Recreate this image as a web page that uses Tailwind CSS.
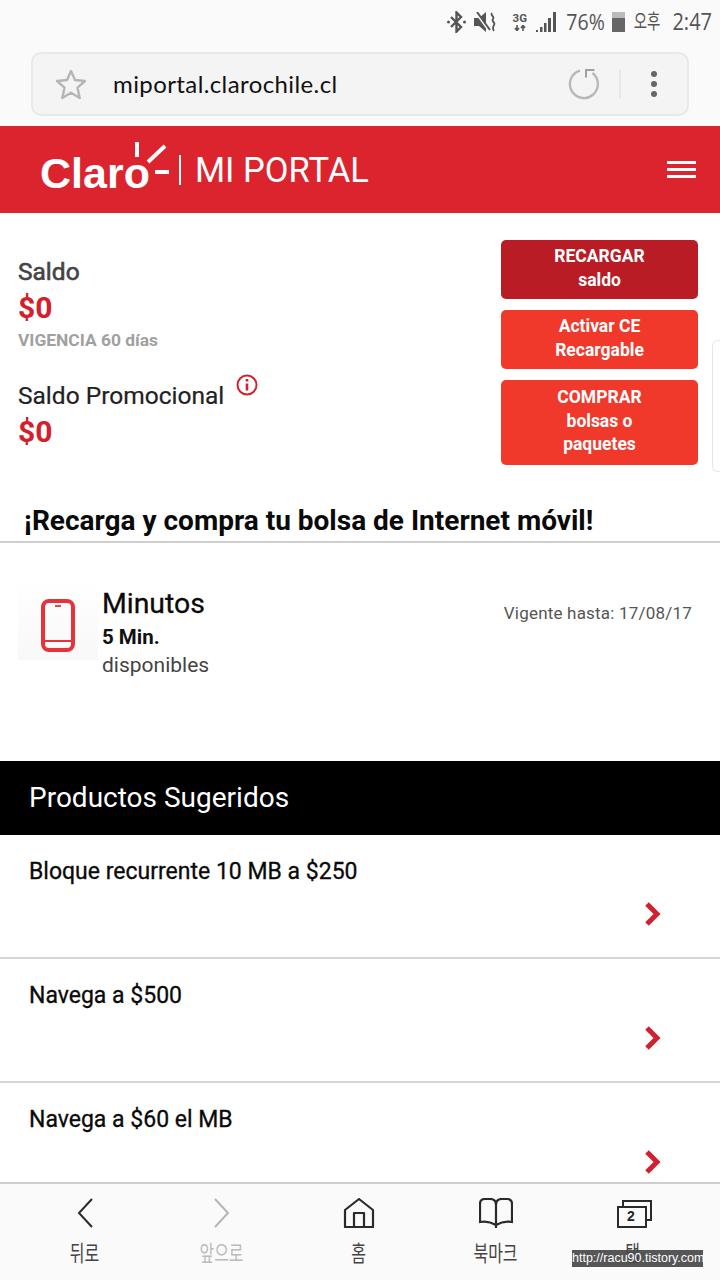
<!DOCTYPE html>
<html lang="es">
  <head>
    <meta charset="UTF-8" />
    <title>Mi Portal</title>
    <script src="https://cdn.jsdelivr.net/npm/@tailwindcss/browser@4"></script>
  </head>
  <body class="bg-white">
    <div class="relative w-[720px] h-[1280px] overflow-hidden flex flex-col font-['Roboto',sans-serif]">
      <!-- Browser chrome -->
      <div class="h-[126px] shrink-0 bg-[#fafafa] flex flex-col">
        <div class="h-[43px] flex items-center justify-end pr-[8px] text-[#555] font-['Open_Sans',sans-serif]">
          <svg class="w-[19px] h-[22px] mr-[8px]" viewBox="0 0 19 22" fill="none" stroke="#555" stroke-width="2.400"><path d="M4 6l10 10-4.500 4.500V1.500L14 6 4 16"/><circle cx="1.500" cy="11" r="1.500" fill="#555" stroke="none"/><circle cx="17.500" cy="11" r="1.500" fill="#555" stroke="none"/></svg>
          <svg class="w-[22px] h-[20px] mr-[16px]" viewBox="0 0 22 20" fill="#555"><path d="M0 6h5l7-6v20l-7-6H0z"/><path d="M2 1l13 18" stroke="#fafafa" stroke-width="2"/><path d="M3 0l13 18" stroke="#555" stroke-width="2"/><path d="M18 1c-2 3 3 3 1 6s3 3 1 6-1 4 0 6" fill="none" stroke="#555" stroke-width="1.800"/></svg>
          <div class="flex flex-col items-center mr-[9px] w-[15px] font-['Roboto',sans-serif]">
            <span class="text-[11.500px] leading-[12px] font-bold">3G</span>
            <svg class="mt-[1px] w-[12px] h-[6px]" viewBox="0 0 12 6" fill="none" stroke="#555" stroke-width="1.600"><path d="M3 0v5M1 3l2 2.500L5 3M9 6V1M7 3l2-2.500L11 3"/></svg>
          </div>
          <svg class="w-[20px] h-[20px] mr-[10px]" viewBox="0 0 20 20" fill="#555"><path d="M0 18h2v2H0zM4 15h2.500v5H4zM8 11h2.500v9H8zM12 6h3v14h-3zM17 0h3v20h-3z"/></svg>
          <span class="text-[19.500px] leading-none mr-[7px] scale-y-[1.15]">76%</span>
          <div class="relative w-[13px] h-[20px] mr-[9px] bg-[#666]">
            <div class="absolute left-0 top-0 w-full h-[6px] bg-[#bbb]"></div>
          </div>
          <span class="text-[14.500px] leading-none mr-[12px] scale-y-[1.4] font-['Noto_Sans_CJK_KR',sans-serif]">오후</span>
          <span class="text-[20px] leading-none scale-y-[1.15]">2:47</span>
        </div>
        <div class="mt-[9px] mx-[31px] h-[64px] rounded-[10px] border-2 border-[#e9e9e9] bg-[#f4f4f4] flex items-center">
          <svg class="ml-[22px] w-[32px] h-[32px]" viewBox="0 0 32 32" fill="none" stroke="#b5b5b5" stroke-width="2.400" stroke-linejoin="round"><path d="M16 3l4 9 10 1-7.500 6.700L24.700 30 16 24.700 7.300 30l2.200-10.300L2 13l10-1z"/></svg>
          <span class="ml-[26px] text-[24px] leading-none text-[#111] font-['Lato',sans-serif] tracking-[0.4px]">miportal.clarochile.cl</span>
          <svg class="ml-auto w-[32px] h-[32px]" viewBox="0 0 32 32" fill="none" stroke="#b8b8b8" stroke-width="2.400"><path d="M12 2.600A14 14 0 1 0 24.500 5"/><path d="M26.500 2H18v7.500" stroke="#a0a0a0" stroke-width="2"/></svg>
          <div class="ml-[19px] w-[2px] h-[28px] bg-[#e6e6e6]"></div>
          <div class="ml-[30px] mr-[30px] flex flex-col gap-[4px]">
            <div class="w-[6px] h-[6px] rounded-full bg-[#666]"></div>
            <div class="w-[6px] h-[6px] rounded-full bg-[#666]"></div>
            <div class="w-[6px] h-[6px] rounded-full bg-[#666]"></div>
          </div>
        </div>
      </div>

      <!-- Site header -->
      <header class="h-[87px] shrink-0 bg-[#dc242e] flex items-center text-white">
        <div class="relative ml-[40px] w-[130px] h-[60px] font-['Liberation_Sans',sans-serif]">
          <span class="absolute left-0 top-[9px] text-[43px] leading-[48px] font-bold">Claro</span>
          <svg class="absolute left-0 top-0 w-[130px] h-[60px]" viewBox="0 0 130 60" stroke="#fff" stroke-width="4" fill="none"><path d="M97 2v15M108 22l17-16M115 32h14"/></svg>
        </div>
        <div class="ml-[9px] w-[2px] h-[30px] bg-white"></div>
        <span class="ml-[14px] pt-[2px] text-[34.500px] leading-none">MI PORTAL</span>
        <div class="ml-auto mr-[24px] flex flex-col gap-[4px]">
          <div class="w-[29px] h-[3px] bg-white"></div>
          <div class="w-[29px] h-[3px] bg-white"></div>
          <div class="w-[29px] h-[3px] bg-white"></div>
        </div>
      </header>

      <main class="flex-1 min-h-0 overflow-hidden flex flex-col">
        <!-- Balance -->
        <section class="h-[291px] shrink-0 flex justify-between pl-[18px] pr-[22px]">
          <div class="pt-[44px]">
            <h2 class="text-[24.500px] leading-[29px] text-[#444] [-webkit-text-stroke:0.6px]">Saldo</h2>
            <p class="mt-[4px] text-[30px] leading-[36px] font-bold text-[#d3202c]">$0</p>
            <p class="mt-[4px] text-[17.400px] leading-[20px] font-bold text-[#a0a0a0]">VIGENCIA 60 días</p>
            <div class="mt-[31px] flex items-start">
              <h2 class="text-[24.500px] leading-[29px] text-[#222] [-webkit-text-stroke:0.2px]">Saldo Promocional</h2>
              <svg class="ml-[12px] -mt-[7px] w-[22px] h-[22px]" viewBox="0 0 22 22" fill="none"><circle cx="11" cy="11" r="9.500" stroke="#d3202c" stroke-width="2"/><path d="M11 9.500v7M11 5v2.500" stroke="#d3202c" stroke-width="2.600"/></svg>
            </div>
            <p class="mt-[4px] text-[30px] leading-[36px] font-bold text-[#d3202c]">$0</p>
          </div>
          <div class="pt-[27px] w-[197px] flex flex-col gap-[11px] text-white text-[17.500px] leading-[23.500px] font-bold text-center">
            <a class="h-[59px] rounded-[5px] bg-[#b91c24] block pt-[5px]">RECARGAR<br />saldo</a>
            <a class="h-[59px] rounded-[5px] bg-[#f1392b] block pt-[5px]">Activar CE<br />Recargable</a>
            <a class="h-[85px] rounded-[5px] bg-[#f1392b] block pt-[6px]">COMPRAR<br />bolsas o<br />paquetes</a>
          </div>
        </section>

        <h1 class="h-[39px] shrink-0 pl-[24px] text-[28px] leading-[33px] font-bold text-[#0a0a0a] border-b-2 border-[#cfcfcf]">¡Recarga y compra tu bolsa de Internet móvil!</h1>

        <!-- Minutes -->
        <section class="h-[218px] shrink-0 flex">
          <div class="mt-[37px] ml-[18px] w-[80px] h-[80px] bg-linear-to-b from-white to-[#f8f8f8] flex justify-center pt-[19px]">
            <svg class="w-[34px] h-[53px]" viewBox="0 0 34 53" fill="none" stroke="#e8323a" stroke-width="4"><rect x="2" y="2" width="30" height="49" rx="6"/><path d="M2 42h30" stroke-width="2"/><path d="M14 7h6" stroke-width="1.800"/></svg>
          </div>
          <div class="ml-[4px] pt-[44px]">
            <h3 class="text-[28.400px] leading-[34px] text-[#0a0a0a] [-webkit-text-stroke:0.3px]">Minutos</h3>
            <p class="mt-[3px] text-[20.500px] leading-[26px] font-bold text-[#111]">5 Min.</p>
            <p class="mt-[1px] text-[21px] leading-[28px] text-[#444]">disponibles</p>
          </div>
          <p class="ml-auto mr-[28px] pt-[58px] text-[17px] leading-[24px] text-[#555] tracking-[0.2px]">Vigente hasta: 17/08/17</p>
        </section>

        <!-- Suggested products -->
        <div class="h-[74px] shrink-0 bg-black flex items-center pl-[29px] text-[28px] text-white">Productos Sugeridos</div>
        <ul class="flex flex-col text-[23px] leading-[32px] text-[#0a0a0a] [-webkit-text-stroke:0.3px]">
          <li class="h-[124px] shrink-0 border-b-2 border-[#d5d5d5] px-[29px] pt-[21px] relative">
            Bloque recurrente 10 MB a $250
            <svg class="absolute right-[59px] top-[67px] w-[17px] h-[24px]" viewBox="0 0 17 24" fill="none" stroke="#d3202c" stroke-width="5"><path d="M3 2l10 10L3 22"/></svg>
          </li>
          <li class="h-[124px] shrink-0 border-b-2 border-[#d5d5d5] px-[29px] pt-[21px] relative">
            Navega a $500
            <svg class="absolute right-[59px] top-[67px] w-[17px] h-[24px]" viewBox="0 0 17 24" fill="none" stroke="#d3202c" stroke-width="5"><path d="M3 2l10 10L3 22"/></svg>
          </li>
          <li class="h-[124px] shrink-0 px-[29px] pt-[21px] relative">
            Navega a $60 el MB
            <svg class="absolute right-[59px] top-[67px] w-[17px] h-[24px]" viewBox="0 0 17 24" fill="none" stroke="#d3202c" stroke-width="5"><path d="M3 2l10 10L3 22"/></svg>
          </li>
        </ul>
      </main>

      <!-- Scroll handle at the right edge -->
      <div class="absolute right-0 top-[340px] w-[8px] h-[132px] bg-white border border-r-0 border-[#e6e6e6] rounded-l-[6px]"></div>

      <!-- Browser toolbar -->
      <nav class="h-[98px] shrink-0 bg-[#fafafa] border-t-2 border-[#cfcfcf] grid grid-cols-[repeat(5,137px)] pl-[16px] text-[16px] leading-[24px] text-[#444] font-['Noto_Sans_CJK_KR',sans-serif]">
        <div class="flex flex-col items-center pt-[14px]">
          <svg class="w-[16px] h-[30px]" viewBox="0 0 16 30" fill="none" stroke="#2a2a2a" stroke-width="2"><path d="M15 1L2 15l13 14"/></svg>
          <span class="mt-[12px] scale-y-[1.35]">뒤로</span>
        </div>
        <div class="flex flex-col items-center pt-[14px] text-[#bbb]">
          <svg class="w-[16px] h-[30px]" viewBox="0 0 16 30" fill="none" stroke="#b5b5b5" stroke-width="2"><path d="M1 1l13 14L1 29"/></svg>
          <span class="mt-[12px] scale-y-[1.35]">앞으로</span>
        </div>
        <div class="flex flex-col items-center pt-[14px]">
          <svg class="w-[32px] h-[30px]" viewBox="0 0 32 30" fill="none" stroke="#2a2a2a" stroke-width="2.200" stroke-linejoin="round"><path d="M2 12L16 1l14 11v17H2z"/><path d="M11 29V15h10v14"/></svg>
          <span class="mt-[12px] scale-y-[1.35]">홈</span>
        </div>
        <div class="flex flex-col items-center pt-[14px]">
          <svg class="w-[34px] h-[30px]" viewBox="0 0 34 30" fill="none" stroke="#2a2a2a" stroke-width="2.200"><path d="M17 30V7c0-4-2-6-6-6H6C3 1 1 3 1 6v18c5-1 11 0 16 3 5-3 11-4 16-3V6c0-3-2-5-5-5h-5c-4 0-6 2-6 6"/></svg>
          <span class="mt-[12px] scale-y-[1.35]">북마크</span>
        </div>
        <div class="flex flex-col items-center pt-[14px]">
          <div class="relative w-[35px] h-[30px] ml-[4px]">
            <svg class="absolute left-0 top-0 w-[35px] h-[30px]" viewBox="0 0 35 30" fill="none" stroke="#2a2a2a" stroke-width="2"><path d="M6 9V3h28v19h-5"/><rect x="1" y="9" width="28" height="20"/></svg>
            <span class="absolute left-[14px] top-[9px] -translate-x-1/2 text-[14px] leading-[18px] font-bold text-[#222] font-['Liberation_Sans',sans-serif]">2</span>
          </div>
          <span class="mt-[12px] scale-y-[1.35]">탭</span>
        </div>
      </nav>

      <!-- Watermark -->
      <div class="absolute left-[572px] top-[1250px] w-[131px] h-[17px] bg-[#444]/90 text-white text-[12.500px] leading-[17px] text-center font-['Liberation_Sans',sans-serif]">http://racu90.tistory.com</div>
    </div>
  </body>
</html>
